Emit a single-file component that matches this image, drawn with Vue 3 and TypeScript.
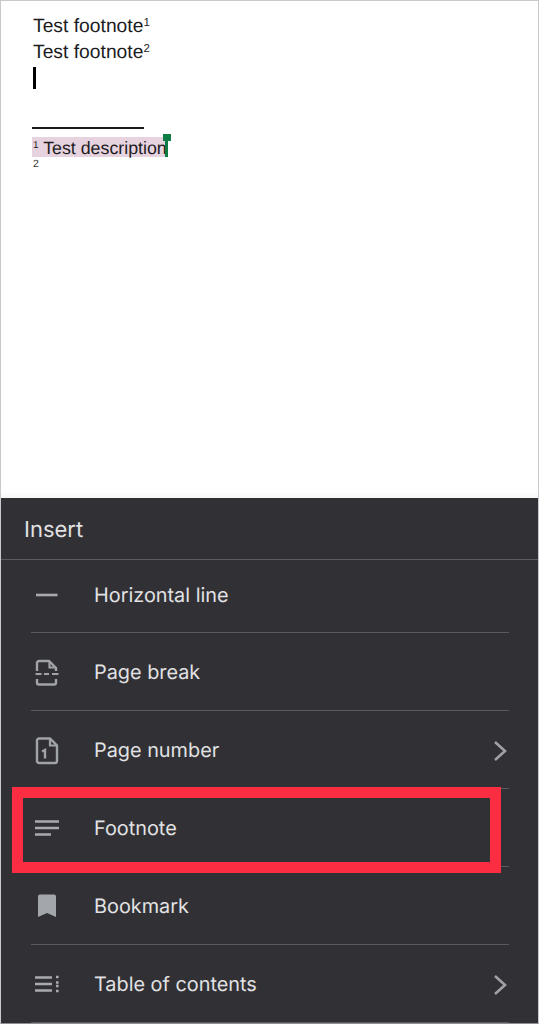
<script setup lang="ts">
interface Row { label: string; icon: string; chevron?: boolean }
const rows: Row[] = [
  { label: 'Horizontal line', icon: 'line' },
  { label: 'Page break', icon: 'break' },
  { label: 'Page number', icon: 'number', chevron: true },
  { label: 'Footnote', icon: 'footnote' },
  { label: 'Bookmark', icon: 'bookmark' },
  { label: 'Table of contents', icon: 'toc', chevron: true },
]
</script>

<template>
  <div class="frame">
    <section class="doc">
      <p class="line">Test footnote<sup>1</sup></p>
      <p class="line">Test footnote<sup>2</sup></p>
      <div class="caret"></div>
      <div class="rule"></div>
      <div class="note">
        <span class="hl"><sup>1</sup> Test description</span>
        <span class="handle"></span>
      </div>
      <div class="note2">2</div>
    </section>

    <section class="sheet">
      <header class="head">Insert</header>
      <ul class="list">
        <li v-for="r in rows" :key="r.label" class="row">
          <span class="ico">
            <svg width="30" height="30" viewBox="0 0 30 30" fill="none">
              <path v-if="r.icon === 'line'" d="M4 15H25.500" stroke="#a8aaae" stroke-width="2.600" />
              <g v-else-if="r.icon === 'break'" stroke="#a0a3a7" stroke-width="2.400">
                <path d="M5 14V6a2 2 0 0 1 2-2h10l7 7v3" />
                <path d="M17.500 4V10.500H24" stroke-width="2.200" />
                <path d="M3.500 17h6M12 17h5M20 17h6.500" stroke-width="2" />
                <path d="M5 22v3.500a2 2 0 0 0 2 2h15a2 2 0 0 0 2-2V22" />
              </g>
              <g v-else-if="r.icon === 'number'">
                <path d="M5 5.500a2 2 0 0 1 2-2h11l7 7V26a2 2 0 0 1-2 2H7a2 2 0 0 1-2-2Z" stroke="#a0a3a7" stroke-width="2.400" />
                <path d="M18 3.500v7h7" stroke="#a0a3a7" stroke-width="2.200" />
                <path d="M10 16.500l3-1.500V23.500" stroke="#a0a3a7" stroke-width="2.400" />
              </g>
              <g v-else-if="r.icon === 'footnote'" stroke="#a8aaae" stroke-width="2.600">
                <path d="M3 8.500H27M3 15H27M3 21.500H19" />
              </g>
              <path v-else-if="r.icon === 'bookmark'" d="M6 5.500a2 2 0 0 1 2-2h14a2 2 0 0 1 2 2V26l-9-4L6 26Z" fill="#a3a7ac" />
              <g v-else stroke="#a8aaae" stroke-width="2.600">
                <path d="M3 8.500H20M3 15H20M3 21.500H20" />
                <path d="M24 8h2.600M24 13.500h2.600M24 17h2.600M24 22h2.600" />
              </g>
            </svg>
          </span>
          <span class="label">{{ r.label }}</span>
          <svg v-if="r.chevron" class="chev" width="16" height="22" viewBox="0 0 16 22" fill="none">
            <path d="M3 2l10 9-10 9" stroke="#a0a1a4" stroke-width="2.600" />
          </svg>
        </li>
      </ul>
      <div class="mark"></div>
    </section>
  </div>
</template>

<style scoped>
.frame {
  width: 539px;
  height: 1024px;
  box-sizing: border-box;
  border: 1px solid #c9c9cb;
  border-bottom-color: #8e8e90;
  background: #fff;
  display: flex;
  flex-direction: column;
  overflow: hidden;
  text-rendering: geometricPrecision;
}
.doc {
  height: 497px;
  box-sizing: border-box;
  padding: 13px 0 0 32px;
  font-family: "Liberation Sans", Arial, sans-serif;
  color: #1c1c1e;
  background: linear-gradient(#fff 490px, #f7f7f7);
}
.line {
  margin: 0;
  font-size: 19.300px;
  line-height: 26px;
  height: 26px;
}
sup {
  font-size: 11.500px;
  line-height: 0;
  vertical-align: 6.500px;
}
.caret {
  width: 2.500px;
  height: 22px;
  margin-top: 1px;
  background: #000;
}
.rule {
  width: 112px;
  height: 1.500px;
  margin: 38px 0 0 -1px;
  background: #1a1a1a;
}
.note {
  position: relative;
  margin: 8px 0 0 -1px;
  height: 20px;
  width: 133px;
  background: #e7d3df;
  font-size: 17.800px;
  line-height: 22px;
  white-space: nowrap;
}
.hl {
  padding-left: 1px;
}
.hl sup {
  font-size: 10px;
  vertical-align: 6px;
}
.handle {
  position: absolute;
  left: 133px;
  top: 4px;
  width: 3px;
  height: 16px;
  background: #0f7c45;
}
.handle::before {
  content: "";
  position: absolute;
  left: -2px;
  top: -7px;
  width: 8px;
  height: 7px;
  background: #0f7c45;
}
.note2 {
  font-size: 10.500px;
  line-height: 14px;
  color: #333;
}
.sheet {
  position: relative;
  flex: 1;
  background: #313135;
  font-family: Inter, "Noto Sans", sans-serif;
  color: #e2e2e4;
}
.head {
  height: 62px;
  box-sizing: border-box;
  padding: 19px 0 0 23px;
  font-size: 22px;
  line-height: 26px;
  border-bottom: 1.500px solid #5c5c5f;
}
.list {
  list-style: none;
  margin: 0;
  padding: 0 29px 0 30px;
}
.row {
  position: relative;
  height: 78px;
  box-sizing: border-box;
  display: flex;
  align-items: center;
  padding-top: 1px;
  border-bottom: 1.500px solid #5a5a5d;
  font-size: 19.850px;
}
.row:first-child {
  height: 73px;
  padding-top: 0;
  padding-bottom: 2px;
}
.ico {
  width: 63px;
  display: flex;
  margin-left: 1px;
  margin-right: -1px;
}
.label {
  flex: 1;
}
.chev {
  position: absolute;
  right: 1px;
  top: 29px;
}
.mark {
  position: absolute;
  left: 11px;
  top: 289px;
  width: 489px;
  height: 86px;
  box-sizing: border-box;
  border: 11px solid #fb2d42;
}
</style>
